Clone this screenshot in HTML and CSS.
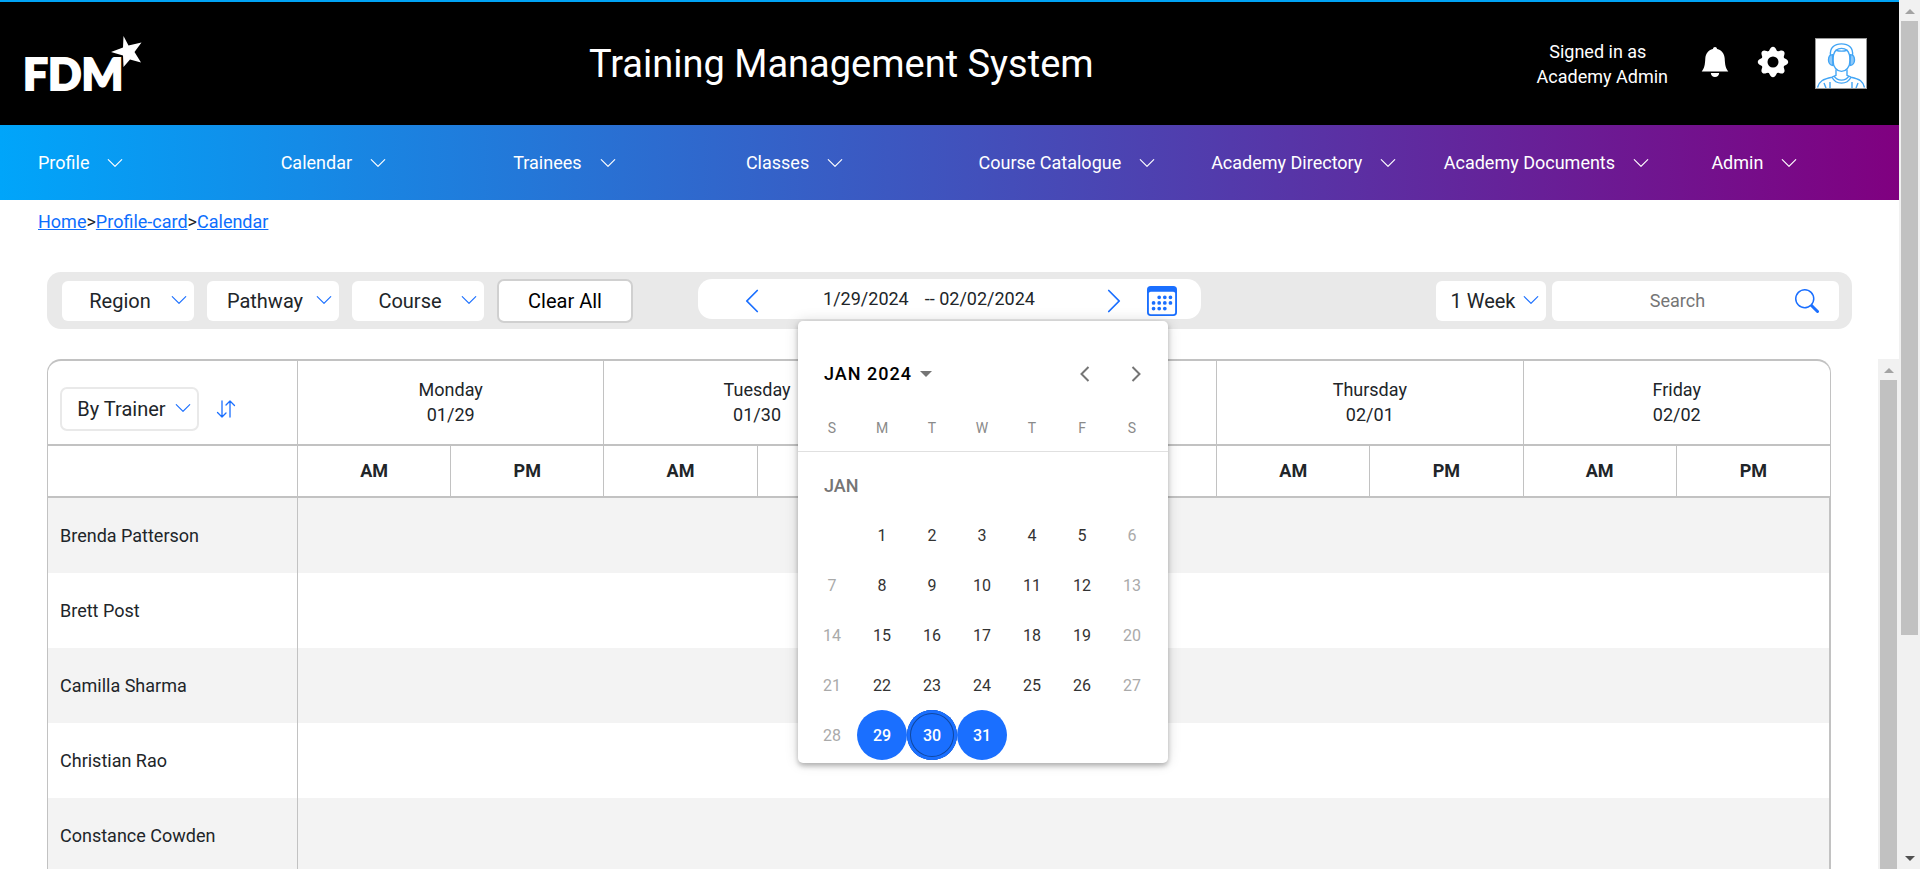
FILE: index.html
```html
<!DOCTYPE html>
<html lang="en">
<head>
<meta charset="utf-8">
<title>Training Management System</title>
<meta name="viewport" content="width=device-width, initial-scale=1">
<link rel="stylesheet" href="styles.css">
</head>
<body>
<svg class="sprite" aria-hidden="true">
  <symbol id="chevron-down" viewBox="0 0 16 16"><path fill="currentColor" d="M1.646 4.646a.5.5 0 0 1 .708 0L8 10.293l5.646-5.647a.5.5 0 0 1 .708.708l-6 6a.5.5 0 0 1-.708 0l-6-6a.5.5 0 0 1 0-.708"/></symbol>
  <symbol id="chevron-left" viewBox="0 0 16 16"><path fill="currentColor" d="M11.354 1.646a.5.5 0 0 1 0 .708L5.707 8l5.647 5.646a.5.5 0 0 1-.708.708l-6-6a.5.5 0 0 1 0-.708l6-6a.5.5 0 0 1 .708 0"/></symbol>
  <symbol id="chevron-right" viewBox="0 0 16 16"><path fill="currentColor" d="M4.646 1.646a.5.5 0 0 1 .708 0l6 6a.5.5 0 0 1 0 .708l-6 6a.5.5 0 0 1-.708-.708L10.293 8 4.646 2.354a.5.5 0 0 1 0-.708"/></symbol>
</svg>
<div class="shell">
  <div class="page">
    <header class="header">
      <a class="logo" href="#" aria-label="FDM home">
        <svg width="121" height="60" viewBox="0 0 121 60">
          <text class="logo-text" x="-2" y="56">FDM</text>
          <path fill="#fff" d="M98.500 2L103.500 11.500L116.500 8.500L109.500 18L116 28.500L105 25.500L98.500 33L98 21.500L86 18L98 13.500Z"/>
        </svg>
      </a>
      <h1 class="title">Training Management System</h1>
      <div class="account">
        <p class="signed">Signed in as&nbsp;&nbsp;<br>Academy Admin</p>
        <button class="icon-btn bell" aria-label="Notifications">
          <svg width="28" height="30" viewBox="0 0 28 30" fill="#fff"><path d="M14 0c1.300 0 1.800.9 2.100 1.900 4.800 1 7.300 4.800 7.600 9.600.3 6.500 1 9.800 3.600 13H.7c2.600-3.200 3.300-6.500 3.600-13C4.600 6.700 7.100 2.900 11.900 1.900 12.200.9 12.700 0 14 0zM9.800 26h8.400c-.3 2.400-1.800 4-4.200 4s-3.900-1.600-4.200-4z"/></svg>
        </button>
        <button class="icon-btn gear" aria-label="Settings">
          <svg width="32" height="32" viewBox="-16 -16 32 32">
            <g fill="#fff">
              <circle r="11.500"/>
              <g id="teeth"><path id="tooth" d="M-5.500-9.500C-3-11-3.200-15.200 0-15.200S3-11 5.500-9.500L5.500 9.500C3 11 3.200 15.200 0 15.200S-3 11-5.500 9.500Z"/><use href="#tooth" transform="rotate(90)"/></g>
              <use href="#teeth" transform="rotate(45)"/>
            </g>
            <circle r="5.500" fill="#000"/>
          </svg>
        </button>
        <a class="avatar" href="#" aria-label="My profile">
          <svg width="50" height="49" viewBox="0 0 50 50" preserveAspectRatio="none" fill="none" stroke="#42a5f5" stroke-width="1.400">
            <path d="M17 22c0-6 1-8.500 3-10.500 3 1 8 1 11 0 2 2 3 4.500 3 10.500 0 7-4 11-8.500 11S17 29 17 22z"/>
            <path d="M14.500 17c-1-8 4-12 11-12s12 4 11 12M20 11.500c3-2.500 8-2.500 11 0"/>
            <path fill="#42a5f5" fill-opacity=".6" d="M16.500 16c-3 0-4 3-4 5.500s1.500 5.500 4.500 5.500zM34.500 16c3 0 4 3 4 5.500S37 27 34 27z"/>
            <path d="M20 31v6l-4 2C7 41 3 43 1.500 49.500M31 31v6l4 2c9 2 12 4 13.500 10.500"/>
            <path d="M18 38c2 3 4.500 4 7.500 4s5.500-1 7.500-4M16 39c2 4 5.500 6 9.500 6s7.500-2 9.500-6M8 45l2 5M14 44v6M42 45l-2 5M36 44v6"/>
          </svg>
        </a>
      </div>
    </header>
    <nav class="nav" aria-label="Main">
      <a href="#">Profile<svg><use href="#chevron-down"/></svg></a>
      <a href="#">Calendar<svg><use href="#chevron-down"/></svg></a>
      <a href="#">Trainees<svg><use href="#chevron-down"/></svg></a>
      <a href="#">Classes<svg><use href="#chevron-down"/></svg></a>
      <a href="#">Course Catalogue<svg><use href="#chevron-down"/></svg></a>
      <a href="#">Academy Directory<svg><use href="#chevron-down"/></svg></a>
      <a href="#">Academy Documents<svg><use href="#chevron-down"/></svg></a>
      <a href="#">Admin<svg><use href="#chevron-down"/></svg></a>
    </nav>
    <div class="crumbs"><a href="#">Home</a>&gt;<a href="#">Profile-card</a>&gt;<a href="#">Calendar</a></div>

    <div class="toolbar">
      <div class="filters">
        <div class="pick"><select aria-label="Region"><option>Region</option></select><svg><use href="#chevron-down"/></svg></div>
        <div class="pick"><select aria-label="Pathway"><option>Pathway</option></select><svg><use href="#chevron-down"/></svg></div>
        <div class="pick"><select aria-label="Course"><option>Course</option></select><svg><use href="#chevron-down"/></svg></div>
        <button class="clear">Clear All</button>
      </div>
      <div class="range">
        <button class="icon-btn step" aria-label="Previous week"><svg width="28" height="28"><use href="#chevron-left"/></svg></button>
        <span class="dates"><span>1/29/2024</span><span>-- 02/02/2024</span></span>
        <button class="icon-btn step" aria-label="Next week"><svg width="28" height="28"><use href="#chevron-right"/></svg></button>
        <button class="icon-btn open-cal" aria-label="Choose date">
          <svg width="30" height="30" viewBox="0 0 16 16" fill="currentColor"><path d="M14 0H2a2 2 0 0 0-2 2v12a2 2 0 0 0 2 2h12a2 2 0 0 0 2-2V2a2 2 0 0 0-2-2M1 3.857C1 3.384 1.448 3 2 3h12c.552 0 1 .384 1 .857v10.286c0 .473-.448.857-1 .857H2c-.552 0-1-.384-1-.857z"/><path d="M6.500 7a1 1 0 1 0 0-2 1 1 0 0 0 0 2m3 0a1 1 0 1 0 0-2 1 1 0 0 0 0 2m3 0a1 1 0 1 0 0-2 1 1 0 0 0 0 2m-9 3a1 1 0 1 0 0-2 1 1 0 0 0 0 2m3 0a1 1 0 1 0 0-2 1 1 0 0 0 0 2m3 0a1 1 0 1 0 0-2 1 1 0 0 0 0 2m3 0a1 1 0 1 0 0-2 1 1 0 0 0 0 2m-9 3a1 1 0 1 0 0-2 1 1 0 0 0 0 2m3 0a1 1 0 1 0 0-2 1 1 0 0 0 0 2m3 0a1 1 0 1 0 0-2 1 1 0 0 0 0 2"/></svg>
        </button>
        <div class="popup" role="dialog" aria-label="Choose date">
          <div class="popup-head">
            <button class="month">JAN 2024<svg width="12" height="6" viewBox="0 0 12 6"><path fill="#757575" d="M0 0h12L6 6z"/></svg></button>
            <button class="icon-btn turn" aria-label="Previous month"><svg width="10" height="16" viewBox="0 0 10 16"><path d="M8.500 1 1.500 8l7 7"/></svg></button>
            <button class="icon-btn turn" aria-label="Next month"><svg width="10" height="16" viewBox="0 0 10 16"><path d="M1.500 1l7 7-7 7"/></svg></button>
          </div>
          <table class="month-grid">
            <thead><tr><th>S</th><th>M</th><th>T</th><th>W</th><th>T</th><th>F</th><th>S</th></tr></thead>
            <tbody>
              <tr><td class="month-name" colspan="7">JAN</td></tr>
              <tr><td></td><td><button>1</button></td><td><button>2</button></td><td><button>3</button></td><td><button>4</button></td><td><button>5</button></td><td><button disabled>6</button></td></tr>
              <tr><td><button disabled>7</button></td><td><button>8</button></td><td><button>9</button></td><td><button>10</button></td><td><button>11</button></td><td><button>12</button></td><td><button disabled>13</button></td></tr>
              <tr><td><button disabled>14</button></td><td><button>15</button></td><td><button>16</button></td><td><button>17</button></td><td><button>18</button></td><td><button>19</button></td><td><button disabled>20</button></td></tr>
              <tr><td><button disabled>21</button></td><td><button>22</button></td><td><button>23</button></td><td><button>24</button></td><td><button>25</button></td><td><button>26</button></td><td><button disabled>27</button></td></tr>
              <tr><td><button disabled>28</button></td><td><button class="on">29</button></td><td><button class="on today">30</button></td><td><button class="on">31</button></td><td></td><td></td><td></td></tr>
            </tbody>
          </table>
        </div>
      </div>
      <div class="lookup">
        <div class="pick pick-week"><select aria-label="Period"><option>1 Week</option></select><svg><use href="#chevron-down"/></svg></div>
        <div class="search">
          <input type="text" placeholder="Search" aria-label="Search">
          <button class="icon-btn go" aria-label="Run search"><svg width="24" height="24" viewBox="0 0 16 16"><path fill="currentColor" d="M11.742 10.344a6.500 6.500 0 1 0-1.397 1.398h-.001q.044.060.098.115l3.850 3.850a1 1 0 0 0 1.415-1.414l-3.850-3.850a1 1 0 0 0-.115-.1zM12 6.500a5.500 5.500 0 1 1-11 0 5.500 5.500 0 0 1 11 0"/></svg></button>
        </div>
      </div>
    </div>

    <div class="schedule">
      <table class="plan">
        <colgroup><col class="col-name"><col span="10"></colgroup>
        <thead>
          <tr class="days">
            <th class="sorter"><div class="sorter-in">
              <div class="pick pick-group"><select aria-label="Group by"><option>By Trainer</option></select><svg><use href="#chevron-down"/></svg></div>
              <button class="icon-btn sort" aria-label="Sort"><svg width="20" height="18" viewBox="0 0 20 18" fill="none" stroke="currentColor" stroke-width="1.300" stroke-linecap="round" stroke-linejoin="round"><path d="M6 1v16M1.500 12.500 6 17l4-4M14 17V1M10 5l4-4 4.500 4.500"/></svg></button>
            </div></th>
            <th colspan="2">Monday<br>01/29</th><th colspan="2">Tuesday<br>01/30</th><th colspan="2">Wednesday<br>01/31</th><th colspan="2">Thursday<br>02/01</th><th colspan="2">Friday<br>02/02</th>
          </tr>
          <tr class="halves"><th></th><th>AM</th><th>PM</th><th>AM</th><th>PM</th><th>AM</th><th>PM</th><th>AM</th><th>PM</th><th>AM</th><th>PM</th></tr>
        </thead>
        <tbody>
          <tr><th scope="row">Brenda Patterson</th><td colspan="10"></td></tr>
          <tr><th scope="row">Brett Post</th><td colspan="10"></td></tr>
          <tr><th scope="row">Camilla Sharma</th><td colspan="10"></td></tr>
          <tr><th scope="row">Christian Rao</th><td colspan="10"></td></tr>
          <tr><th scope="row">Constance Cowden</th><td colspan="10"></td></tr>
        </tbody>
      </table>
      <div class="scroll" aria-hidden="true"><span class="arrow-up"></span><span class="thumb"></span></div>
    </div>
  </div>
  <div class="scroll" aria-hidden="true"><span class="arrow-up"></span><span class="thumb thumb-page"></span><span class="arrow-down"></span></div>
</div>
</body>
</html>
```
FILE: styles.css
```css
* { box-sizing: border-box; }
body { margin: 0; overflow: hidden; background: #fff; color: #212529; font: 18px/25px Roboto, sans-serif; }
button, select, input { font: inherit; color: inherit; margin: 0; }
button { cursor: pointer; }
.sprite { display: none; }
.icon-btn { display: flex; align-items: center; justify-content: center; padding: 0; border: 0; background: none; }

.shell { display: flex; height: 100vh; overflow: hidden; }
.page { flex: 1; min-width: 0; display: flex; flex-direction: column; }

.header { display: flex; align-items: center; flex: none; height: 125px; padding: 0 32px 0 25px; border-top: 2px solid #00a3f5; background: #000; color: #fff; }
.logo { display: block; }
.logo svg { display: block; overflow: visible; }
.logo-text { fill: #fff; stroke: #fff; stroke-width: 2px; font: 900 44px Lato, sans-serif; }
.title { flex: 1; margin: 0; text-align: center; font-size: 38px; line-height: 48px; font-weight: 400; }
.account { display: flex; align-items: center; }
.signed { margin: 0; text-align: center; }
.bell { margin-left: 33px; padding-bottom: 3px; }
.gear { margin-left: 28px; padding-bottom: 3px; }
.avatar { display: block; margin-left: 26px; border: 1px solid #999; background: #fff; }
.avatar svg { display: block; }

.nav { display: grid; grid-template-columns: repeat(8, 1fr); flex: none; height: 75px; padding-left: 38px; background: linear-gradient(to right, #00a5fa, #800080); }
.nav a { display: flex; align-items: center; gap: 17px; padding-left: 10px; color: #fff; text-decoration: none; white-space: nowrap; }
.nav a:first-child { padding-left: 0; }
.nav a:last-child { padding-left: 45px; }
.nav svg { width: 18px; height: 18px; }

.crumbs { padding: 9px 38px; line-height: 26px; }
.crumbs a { color: #0d6efd; }

.toolbar { display: grid; grid-template-columns: 1fr auto 1fr; align-items: center; flex: none; height: 57px; margin: 28px 47px 30px; padding: 0 13px; border-radius: 14px; background: #e9e9e9; }
.filters { display: flex; align-items: center; gap: 13px; padding-left: 2px; }
.pick { position: relative; width: 132px; height: 40px; color: #1a6fff; }
.pick select { width: 100%; height: 100%; padding: 2px 16px 0 0; border: 0; border-radius: 6px; appearance: none; background: #fff; color: #212529; font-size: 20px; text-align: center; }
.pick svg { position: absolute; right: 6px; top: 10px; width: 18px; height: 18px; pointer-events: none; }
.clear { width: 136px; height: 44px; padding: 2px 0 0; border: 2px solid #d0d0d0; border-radius: 7px; background: #fff; color: #000; font-size: 20px; }

.range { position: relative; z-index: 2; display: flex; align-items: center; align-self: start; width: 503px; height: 40px; margin-top: 7px; padding: 0 24px 0 40px; border-radius: 14px; background: #fff; color: #1a6fff; }
.step { padding-top: 3px; }
.dates { flex: 1; display: flex; justify-content: center; gap: 16px; padding: 0 8px 2px 0; color: #212529; }
.open-cal { margin-left: 19px; padding-top: 4px; }

.popup { position: absolute; top: 42px; left: 100px; width: 370px; padding-bottom: 3px; border-radius: 5px; background: #fff; color: #212121; box-shadow: 0 3px 5px rgba(0,0,0,.25), 0 0 14px rgba(0,0,0,.15); }
.popup-head { display: flex; align-items: center; padding: 27px 7px 0 26px; height: 78px; }
.month { display: flex; align-items: center; gap: 8px; margin-right: auto; padding: 0; border: 0; background: none; color: #000; font-weight: 500; letter-spacing: 1px; }
.turn { width: 51px; height: 50px; }
.turn path { fill: none; stroke: #757575; stroke-width: 2; }
.month-grid { width: 100%; border-spacing: 0; table-layout: fixed; }
.month-grid th { height: 53px; padding: 7px 0 0; border-bottom: 1px solid #e0e0e0; color: #8a8a8a; font-size: 14px; font-weight: 400; }
.month-grid th, .month-grid td { width: 50px; text-align: center; }
.month-grid th:first-child, .month-grid td:first-child { padding-left: 9px; width: 59px; }
.month-grid th:last-child, .month-grid td:last-child { padding-right: 11px; width: 61px; }
.month-grid td { height: 50px; padding: 0; font-size: 16px; }
.month-grid td.month-name { height: 58px; padding: 8px 26px 0; text-align: left; color: #757575; font-size: 18px; font-weight: 500; }
.month-grid button { display: block; width: 50px; height: 50px; padding: 0; border: 0; border-radius: 50%; background: none; color: #333; }
.month-grid button:disabled { color: #aaa; }
.month-grid .on { background: #1a6fff; color: #fff; font-weight: 500; }
.month-grid .today { box-shadow: inset 0 0 0 3px #1a6fff, inset 0 0 0 4px #11489f; }

.lookup { display: flex; justify-content: flex-end; gap: 6px; }
.pick-week { width: 110px; }
.search { display: flex; align-items: center; width: 287px; height: 40px; padding-right: 20px; border-radius: 6px; background: #fff; color: #1a6fff; }
.search input { flex: 1; min-width: 0; padding: 0 0 0 8px; border: 0; background: none; text-align: center; outline: 0; }
.search input::placeholder { color: #757575; opacity: 1; }

.schedule { flex: 1; min-height: 0; display: flex; gap: 47px; margin-left: 47px; overflow: hidden; }
.plan { flex: 1; align-self: flex-start; width: 100%; border-spacing: 0; table-layout: fixed; border: 0 solid #c2c2c2; border-width: 2px 1px 0; border-radius: 14px 14px 0 0; }
.col-name { width: 250px; }
.plan th { padding: 0; font-weight: 400; }
.plan thead th { border-bottom: 2px solid #c2c2c2; }
.plan thead th:not(:last-child) { border-right: 1px solid #c2c2c2; }
.plan .days th { height: 85px; padding-bottom: 2px; }
.sorter-in { display: flex; align-items: center; gap: 17px; padding: 14px 0 0 12px; }
.pick-group { width: 139px; height: 44px; }
.pick-group select { border: 2px solid #e9e9e9; border-radius: 7px; }
.pick-group svg { top: 12px; right: 7px; }
.sort { color: #1a6fff; }
.plan .halves th { height: 52px; padding-bottom: 2px; font-weight: 700; }
.plan tbody th { height: 75px; padding-left: 12px; border-right: 1px solid #c2c2c2; text-align: left; }
.plan tbody td { border-right: 1px solid #c2c2c2; }
.plan tbody tr:nth-child(odd) { background: #f3f3f3; }

.scroll { flex: none; display: flex; flex-direction: column; align-items: center; width: 21px; background: #f1f1f1; }
.arrow-up { height: 14px; margin-bottom: 7px; border: 5px solid transparent; border-top-width: 9px; border-bottom: 5px solid #a3a3a3; }
.arrow-down { margin: auto 0 8px; border: 5px solid transparent; border-top-color: #505050; border-bottom: 0; }
.thumb { flex: 1; width: 17px; background: #c1c1c1; }
.thumb-page { flex: 0 0 614px; }
```
